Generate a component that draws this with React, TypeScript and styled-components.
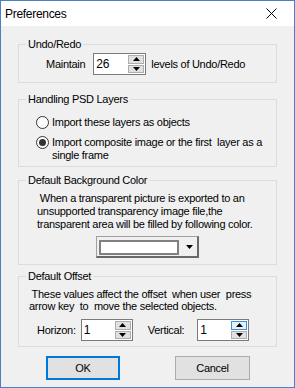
import React from 'react'
import styled, { createGlobalStyle } from 'styled-components'

const GlobalStyle = createGlobalStyle`
  html, body {
    margin: 0;
    padding: 0;
    background: #f0f0f0;
  }
  body {
    font-family: "Liberation Sans", Arial, sans-serif;
    font-size: 11px;
    color: #000;
  }
`

const Window = styled.div`
  width: 295px;
  height: 388px;
  box-sizing: border-box;
  border: 1px solid #4d7fc9;
  background: #f0f0f0;
  display: flex;
  flex-direction: column;
`

const TitleBar = styled.div`
  height: 25px;
  background: #fff;
  display: flex;
  align-items: center;
  justify-content: space-between;
  padding-left: 4px;
  font-size: 12px;
  letter-spacing: -0.3px;
`

const CloseButton = styled.div`
  width: 46px;
  height: 25px;
  display: flex;
  align-items: center;
  justify-content: center;
  padding-left: 1px;
`

const Body = styled.div`
  flex: 1;
  display: flex;
  flex-direction: column;
  padding: 12px 17px 0 17px;
  letter-spacing: -0.28px;
`

const Group = styled.fieldset<{ $h: number; $mt?: number }>`
  margin: ${(p) => p.$mt ?? 0}px 0 0 0;
  padding: 0;
  border: 1px solid #dcdcdc;
  height: ${(p) => p.$h}px;
  box-sizing: border-box;
  min-width: 0;
`

const Legend = styled.legend`
  margin-left: 7px;
  padding: 0 2px;
  line-height: 13px;
  font-size: 11px;
`

const Content = styled.div<{ $pt: number; $pl: number }>`
  padding: ${(p) => p.$pt}px 0 0 ${(p) => p.$pl}px;
  display: flex;
  flex-direction: column;
`

const Row = styled.div<{ $gap?: number }>`
  display: flex;
  align-items: center;
  height: 22px;
  gap: ${(p) => p.$gap ?? 5}px;
`

const Label = styled.span<{ $ml?: number }>`
  margin-left: ${(p) => p.$ml ?? 0}px;
  white-space: pre;
`

const SpinBox = styled.div<{ $w: number }>`
  width: ${(p) => p.$w}px;
  height: 22px;
  box-sizing: border-box;
  border: 1px solid #7a7a7a;
  background: #fff;
  display: flex;
`

const SpinValue = styled.div`
  flex: 1;
  font-size: 12px;
  line-height: 20px;
  padding-left: 2px;
`

const SpinButtons = styled.div`
  width: 16px;
  display: flex;
  flex-direction: column;
  gap: 1px;
  padding: 1px;
  background: #fff;
`

const SpinBtn = styled.div<{ $hot?: boolean }>`
  flex: 1;
  box-sizing: border-box;
  border: 1px solid ${(p) => (p.$hot ? '#3c8fdd' : '#adadad')};
  background: ${(p) => (p.$hot ? '#e5f1fb' : '#e1e1e1')};
  display: flex;
  align-items: center;
  justify-content: center;
`

const RadioRow = styled.div<{ $mt?: number }>`
  display: flex;
  align-items: flex-start;
  gap: 3px;
  margin-top: ${(p) => p.$mt ?? 0}px;
  line-height: 13px;
`

const RadioCircle = styled.div<{ $checked?: boolean }>`
  width: 13px;
  height: 13px;
  box-sizing: border-box;
  border-radius: 50%;
  border: 1px solid #333;
  background: #fff;
  display: flex;
  align-items: center;
  justify-content: center;
  flex-shrink: 0;
  &::after {
    content: '';
    width: 7px;
    height: 7px;
    border-radius: 50%;
    background: ${(p) => (p.$checked ? '#333' : 'transparent')};
  }
`

const Para = styled.div<{ $lh: number }>`
  line-height: ${(p) => p.$lh}px;
  white-space: pre;
`

const ColorCombo = styled.div`
  align-self: center;
  margin: 5px 0 0 -18px;
  width: 103px;
  height: 22px;
  box-sizing: border-box;
  border-top: 1px solid #a0a0a0;
  border-left: 1px solid #a0a0a0;
  border-right: 2px solid #696969;
  border-bottom: 2px solid #696969;
  background: #f0f0f0;
  display: flex;
  padding: 3px 0 1px 2px;
`

const ColorSwatch = styled.div`
  width: 80px;
  box-sizing: border-box;
  border: 2px solid #808080;
  background: #fff;
`

const ComboArrow = styled.div`
  flex: 1;
  display: flex;
  align-items: center;
  justify-content: center;
  padding-left: 2px;
  margin-top: -2px;
`

const ButtonRow = styled.div`
  display: flex;
  justify-content: center;
  gap: 55px;
  margin-top: 9px;
  padding-left: 1px;
`

const Button = styled.div<{ $default?: boolean }>`
  width: ${(p) => (p.$default ? 74 : 75)}px;
  height: 24px;
  box-sizing: border-box;
  border: ${(p) => (p.$default ? '2px solid #0078d7' : '1px solid #adadad')};
  background: #e1e1e1;
  display: flex;
  align-items: center;
  justify-content: center;
  font-size: 11px;
`

const UpArrow = () => (
  <svg width="7" height="4" viewBox="0 0 7 4">
    <path d="M3.5 0 L7 4 L0 4 Z" fill="#000" />
  </svg>
)

const DownArrow = ({ w = 7 }: { w?: number }) => (
  <svg width={w} height="4" viewBox="0 0 7 4">
    <path d="M0 0 L7 0 L3.5 4 Z" fill="#000" />
  </svg>
)

function Spin({ value, width, hot }: { value: string; width: number; hot?: boolean }) {
  return (
    <SpinBox $w={width}>
      <SpinValue>{value}</SpinValue>
      <SpinButtons>
        <SpinBtn $hot={hot}>
          <UpArrow />
        </SpinBtn>
        <SpinBtn>
          <DownArrow />
        </SpinBtn>
      </SpinButtons>
    </SpinBox>
  )
}

export default function App() {
  return (
    <>
      <GlobalStyle />
      <Window>
        <TitleBar>
          <span>Preferences</span>
          <CloseButton>
            <svg width="11" height="11" viewBox="0 0 11 11">
              <path d="M0.5 0.5 L10.5 10.5 M10.5 0.5 L0.5 10.5" stroke="#000" strokeWidth="1" />
            </svg>
          </CloseButton>
        </TitleBar>
        <Body>
          <Group $h={45}>
            <Legend>Undo/Redo</Legend>
            <Content $pt={2} $pl={27}>
              <Row $gap={8}>
                <Label>Maintain</Label>
                <Spin value="26" width={53} />
                <Label $ml={-3}>levels of Undo/Redo</Label>
              </Row>
            </Content>
          </Group>

          <Group $h={74} $mt={10}>
            <Legend>Handling PSD Layers</Legend>
            <Content $pt={10} $pl={17}>
              <RadioRow>
                <RadioCircle />
                <span>Import these layers as objects</span>
              </RadioRow>
              <RadioRow $mt={7}>
                <RadioCircle $checked />
                <span>
                  Import composite image or the first&nbsp; layer as a
                  <br />
                  single frame
                </span>
              </RadioRow>
            </Content>
          </Group>

          <Group $h={91} $mt={7}>
            <Legend>Default Background Color</Legend>
            <Content $pt={5} $pl={18}>
              <Para $lh={13}>
                {' When a transparent picture is exported to an\nunsupported transparency image file,the\ntransparent area will be filled by following color.'}
              </Para>
              <ColorCombo>
                <ColorSwatch />
                <ComboArrow>
                  <DownArrow />
                </ComboArrow>
              </ColorCombo>
            </Content>
          </Group>

          <Group $h={77} $mt={5}>
            <Legend>Default Offset</Legend>
            <Content $pt={5} $pl={10}>
              <Para $lh={12}>
                {' These values affect the offset  when user  press\narrow key  to  move the selected objects.'}
              </Para>
              <Row $gap={5} style={{ marginTop: 7, paddingLeft: 8 }}>
                <Label>Horizon:</Label>
                <Spin value="1" width={52} />
                <Label $ml={10}>Vertical:</Label>
                <Label $ml={3} />
                <Spin value="1" width={52} hot />
              </Row>
            </Content>
          </Group>

          <ButtonRow>
            <Button $default>OK</Button>
            <Button>Cancel</Button>
          </ButtonRow>
        </Body>
      </Window>
    </>
  )
}
